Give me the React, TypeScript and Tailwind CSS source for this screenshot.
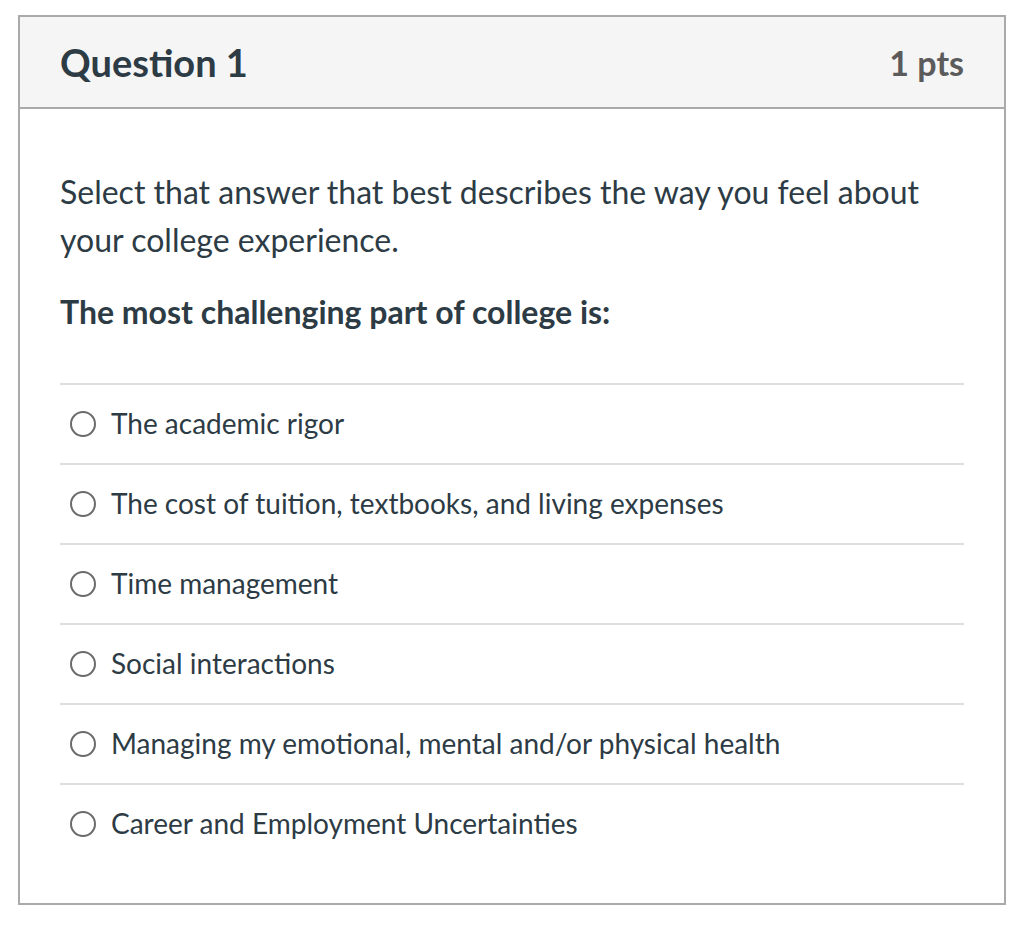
import { useState } from "react";

const answers = [
  "The academic rigor",
  "The cost of tuition, textbooks, and living expenses",
  "Time management",
  "Social interactions",
  "Managing my emotional, mental and/or physical health",
  "Career and Employment Uncertainties",
];

export default function App() {
  const [picked, setPicked] = useState<number | null>(null);

  return (
    <div className="min-h-screen bg-white pt-[15px] pl-[18px] font-['Lato','Noto_Sans',sans-serif] text-[#2d3b45]">
      <div className="w-[988px] border-2 border-[#aaaaaa]">
        <div className="flex h-[92px] items-center justify-between border-b-2 border-[#aaaaaa] bg-[#f5f5f5] px-10">
          <h2 className="text-[38px] font-bold">Question 1</h2>
          <span className="text-[34px] font-bold text-[#5b5b5b]">1 pts</span>
        </div>

        <div className="px-10 pt-[59px] pb-10">
          <p className="text-[32px] leading-[48px]">
            Select that answer that best describes the way you feel about your college experience.
          </p>
          <p className="mt-6 text-[32px] font-bold leading-[48px]">The most challenging part of college is:</p>

          <div className="mt-[47px]">
            {answers.map((a, i) => (
              <label
                key={a}
                className="flex h-[80px] cursor-pointer items-center border-t-2 border-[#dddddd] pl-[10px]"
              >
                <input
                  type="radio"
                  name="q1"
                  checked={picked === i}
                  onChange={() => setPicked(i)}
                  className="sr-only"
                />
                <span className="flex h-[26px] w-[26px] items-center justify-center rounded-full border-2 border-[#6b6b6b]">
                  {picked === i && <span className="h-3 w-3 rounded-full bg-[#2d3b45]" />}
                </span>
                <span className="ml-[15px] pb-[3px] text-[28px]">{a}</span>
              </label>
            ))}
          </div>
        </div>
      </div>
    </div>
  );
}
